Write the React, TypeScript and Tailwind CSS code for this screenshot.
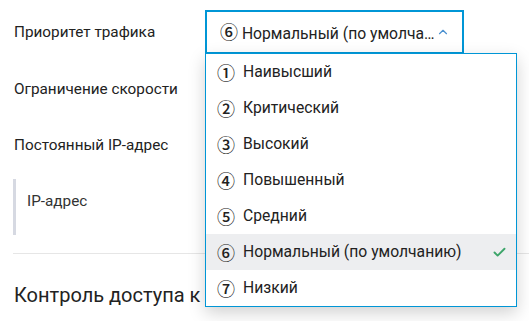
import { Check, ChevronUp } from "lucide-react";

const options = [
  { num: "①", label: "Наивысший" },
  { num: "②", label: "Критический" },
  { num: "③", label: "Высокий" },
  { num: "④", label: "Повышенный" },
  { num: "⑤", label: "Средний" },
  { num: "⑥", label: "Нормальный (по умолчанию)" },
  { num: "⑦", label: "Низкий" },
];

const selected = 5;

export default function App() {
  return (
    <div className="relative h-[321px] w-[529px] overflow-hidden bg-white font-['Roboto','DejaVu_Sans',sans-serif] text-[15.3px] text-[#222]">
      <div className="pt-[10px] pl-[14px]">
        <div className="flex h-[44px] items-center">
          <div className="w-[191px]">Приоритет трафика</div>
          <div className="flex h-[44px] w-[259px] items-center border-2 border-[#0096d6] pl-[13px] pr-[12px] text-[15.7px]">
            <span className="min-w-0 flex-1 truncate">
              <span className="font-['Noto_Sans_CJK_JP',sans-serif] text-[18px] font-medium">⑥</span> Нормальный (по умолчанию)
            </span>
            <ChevronUp className="h-[14px] w-[14px] shrink-0 text-[#4a90d0]" strokeWidth={2} />
          </div>
        </div>
        <div className="mt-[13px] flex h-[44px] items-center">Ограничение скорости</div>
        <div className="mt-[12px] flex h-[44px] items-center">Постоянный IP-адрес</div>
        <div className="mt-[12px] ml-[-1px] h-[56px] border-l-[3px] border-[#d6d9e2] pl-[11px] pt-[11px] text-[#333]">
          IP-адрес
        </div>
        <div className="mt-[18px] ml-[-1px] border-t border-[#e6e6e6]" />
        <div className="mt-[28px] text-[20px] leading-[26px]">Контроль доступа к устройству</div>
      </div>

      <div className="absolute left-[205px] top-[53px] w-[312px] border border-[#0096d6] bg-white text-[15.7px] shadow-[0_6px_16px_rgba(0,0,0,0.18)]">
        {options.map((o, i) => (
          <div
            key={o.num}
            className={`flex h-[36px] items-center pl-[11px] pr-[9px] ${i === selected ? "bg-[#edeef0]" : ""}`}
          >
            <span className="w-[26px] font-['Noto_Sans_CJK_JP',sans-serif] text-[18px] font-medium leading-[34px]">{o.num}</span>
            <span className="flex-1">{o.label}</span>
            {i === selected && <Check className="h-[15px] w-[15px] text-[#3da56a]" strokeWidth={3} />}
          </div>
        ))}
      </div>
    </div>
  );
}
